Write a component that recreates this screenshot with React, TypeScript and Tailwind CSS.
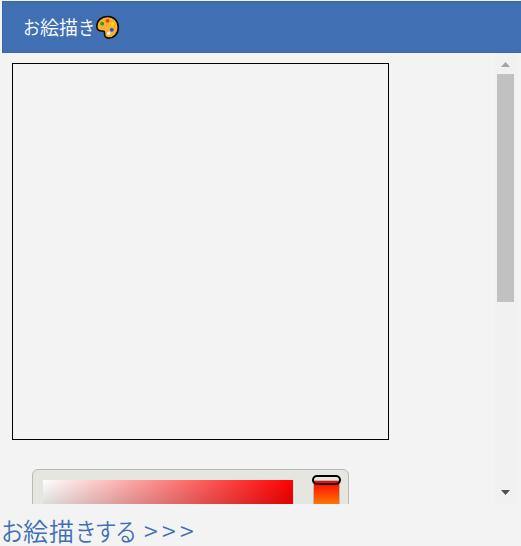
import React from 'react';

function PaletteIcon() {
  return (
    <svg className="mt-px h-[25px] w-[25px] shrink-0" viewBox="0 0 25 25">
      <path
        d="M12.500 1.500C6.200 1.500 1.800 6 1.800 11.200c0 3.600 2.600 5.200 5.400 4.800 1.800-.2 2.500.6 2.300 2.200-.3 3 1.300 4.900 4.300 4.900 5.400 0 9.500-4.500 9.500-10.700C23.300 5.800 18.800 1.500 12.500 1.500z"
        fill="#fcae2c"
        stroke="#0b0b0b"
        strokeWidth="1.6"
      />
      <circle cx="12.500" cy="5.800" r="1.900" fill="#f03a17" />
      <circle cx="7.200" cy="8.700" r="1.900" fill="#16a51b" />
      <circle cx="17.500" cy="9" r="1.900" fill="#ffdf00" />
      <circle cx="16.800" cy="14.800" r="1.900" fill="#0757e8" />
      <circle cx="13.700" cy="18.200" r="1.700" fill="#fff" />
    </svg>
  );
}

function ColorPicker() {
  return (
    <div className="ml-5 mt-[29px] flex h-[220px] w-[317px] shrink-0 rounded-[6px] border border-[#b9b9b9] bg-[#e6e6e0] pl-[10px] pt-[10px]">
      <div className="h-[180px] w-[250px] bg-[linear-gradient(to_bottom,rgba(0,0,0,0),rgba(0,0,0,1)),linear-gradient(to_right,#ffffff,#ff0000)]" />
      <div className="relative ml-5 h-[150px] w-[27px] border-x border-t border-[#b9b9b9] bg-[linear-gradient(to_bottom,#ff0000_0%,#ffff00_33%,#00ff00_50%,#00ffff_67%,#0000ff_83%,#ff0000_100%)]">
        <div className="absolute -left-[2px] -top-[6px] h-[10px] w-[29px] rounded-[5px] border-2 border-black" />
      </div>
    </div>
  );
}

function Scrollbar() {
  return (
    <div className="flex w-[21px] shrink-0 flex-col items-center justify-between bg-[#f1f1f1]">
      <div className="flex flex-col items-center">
        <svg className="mt-[9px] h-[5px] w-[9px]" viewBox="0 0 9 5">
          <path d="M0 5L4.500 0L9 5z" fill="#a3a3a3" />
        </svg>
        <div className="mt-[7px] h-[228px] w-[17px] bg-[#c1c1c1]" />
      </div>
      <svg className="mb-[9px] h-[5px] w-[9px]" viewBox="0 0 9 5">
        <path d="M0 0L4.500 5L9 0z" fill="#505050" />
      </svg>
    </div>
  );
}

export default function App() {
  return (
    <div className="flex h-[546px] w-[521px] flex-col overflow-hidden bg-[#f3f3f3] pt-px font-['Noto_Sans_CJK_JP','Noto_Sans',sans-serif]">
      <header className="ml-[2px] flex h-[52px] shrink-0 items-center border border-r-0 border-[#3a68a5] bg-[#4070b3] pl-5 text-white">
        <h1 className="flex text-[19px] leading-[26px] font-[350]">
          <span className="block w-[17px] origin-left scale-x-[0.9]">お</span>
          <span className="block w-[19px]">絵</span>
          <span className="block w-[19px]">描</span>
          <span className="block w-[17px] origin-left scale-x-[0.9]">き</span>
        </h1>
        <PaletteIcon />
      </header>
      <main className="flex h-[451px] shrink-0">
        <section className="ml-3 flex w-[483px] flex-col overflow-hidden pt-[10px]">
          <div className="h-[377px] w-[377px] shrink-0 border border-black" />
          <ColorPicker />
        </section>
        <Scrollbar />
      </main>
      <footer className="flex h-[42px] items-center pl-px pt-[10px] text-[25px] leading-[30px] font-[350] text-[#4070b3]">
        <span className="block w-[22px] origin-left scale-x-[0.9]">お</span>
        <span className="block w-[26px]">絵</span>
        <span className="block w-[26px]">描</span>
        <span className="block w-[20px] origin-left scale-x-[0.86]">き</span>
        <span className="block w-[20px] origin-left scale-x-[0.86]">す</span>
        <span className="block w-[29px] origin-left scale-x-[0.88]">る</span>
        <span className="block w-[18px]">&gt;</span>
        <span className="block w-[18px]">&gt;</span>
        <span className="block w-[18px]">&gt;</span>
      </footer>
    </div>
  );
}
